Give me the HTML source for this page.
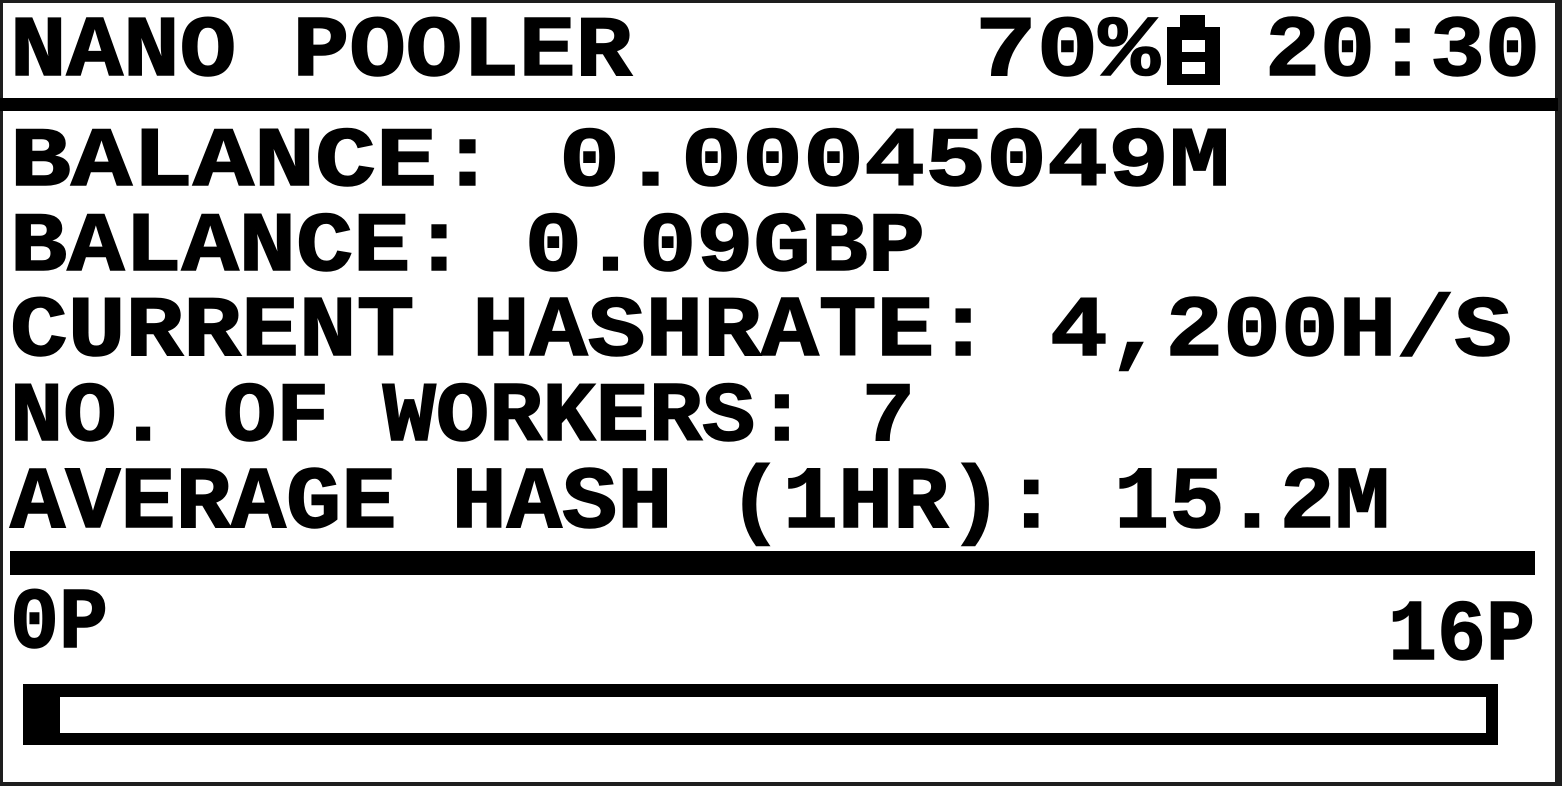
<!DOCTYPE html>
<html><head><meta charset="utf-8"><style>
html,body{margin:0;padding:0;background:#fff;width:1562px;height:786px;overflow:hidden}
svg{display:block}
text{font-family:"Liberation Mono",monospace;font-weight:bold;fill:#000;stroke:#000;stroke-width:1.5;stroke-linejoin:miter}
</style></head><body>
<svg width="1562" height="786" viewBox="0 0 1562 786">
<rect x="0" y="0" width="1562" height="786" fill="#fff"/>
<rect x="0" y="0" width="1562" height="3" fill="#1e1e1e"/>
<rect x="0" y="0" width="3" height="786" fill="#1e1e1e"/>
<rect x="1555" y="0" width="7" height="786" fill="#1e1e1e"/>
<rect x="0" y="782" width="1562" height="4" fill="#1e1e1e"/>
<rect x="0" y="98" width="1558" height="13" fill="#000"/>

<text x="10" y="75" font-size="86" textLength="622" lengthAdjust="spacingAndGlyphs">NANO POOLER</text>
<text x="975" y="75" font-size="86" textLength="185" lengthAdjust="spacingAndGlyphs">70%</text>
<rect x="1180" y="15" width="25" height="14" fill="#000"/>
<rect x="1167" y="27" width="53" height="58" fill="#000"/>
<rect x="1182" y="40" width="23" height="12" fill="#fff"/>
<rect x="1182" y="62" width="23" height="12" fill="#fff"/>
<text x="1265" y="75" font-size="86" textLength="275" lengthAdjust="spacingAndGlyphs">20:30</text>

<text x="10" y="185" font-size="84" textLength="1220" lengthAdjust="spacingAndGlyphs">BALANCE: 0.00045049M</text>
<text x="10" y="270" font-size="84" textLength="915" lengthAdjust="spacingAndGlyphs">BALANCE: 0.09GBP</text>
<text x="10" y="355" font-size="86" textLength="1502" lengthAdjust="spacingAndGlyphs">CURRENT HASHRATE: 4,200H/S</text>
<text x="10" y="440" font-size="84" textLength="905" lengthAdjust="spacingAndGlyphs">NO. OF WORKERS: 7</text>
<text x="10" y="527" font-size="88" textLength="1380" lengthAdjust="spacingAndGlyphs">AVERAGE HASH (1HR): 15.2M</text>

<rect x="10" y="551" width="1525" height="24" fill="#000"/>
<text x="10" y="647" font-size="86" textLength="98" lengthAdjust="spacingAndGlyphs">0P</text>
<text x="1388" y="659" font-size="86" textLength="147" lengthAdjust="spacingAndGlyphs">16P</text>

<rect x="23" y="684" width="1475" height="61" fill="#000"/>
<rect x="60" y="697" width="1426" height="36" fill="#fff"/>
</svg>
</body></html>
